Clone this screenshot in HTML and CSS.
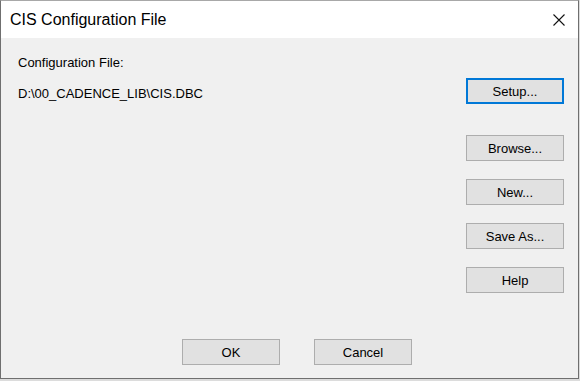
FILE: index.html
```html
<!DOCTYPE html>
<html>
<head>
    <title>CIS Configuration File</title>
    <link rel="stylesheet" href="styles.css">
</head>
<body>
    <div class="window">
        <div class="title-bar">
            <span class="title">CIS Configuration File</span>
            <svg class="close-icon" width="12" height="12" viewBox="0 0 12 12">
                <path d="M0.5 0.5 L11.5 11.5 M11.5 0.5 L0.5 11.5" stroke="#111" stroke-width="1.1" fill="none"/>
            </svg>
        </div>
        <div class="dialog-body">
            <div class="main-area">
                <div class="file-info">
                    <div class="file-label">Configuration File:</div>
                    <div class="file-path">D:\00_CADENCE_LIB\CIS.DBC</div>
                </div>
                <div class="side-buttons">
                    <button class="btn btn-default setup-btn">Setup...</button>
                    <button class="btn">Browse...</button>
                    <button class="btn">New...</button>
                    <button class="btn">Save As...</button>
                    <button class="btn">Help</button>
                </div>
            </div>
            <div class="footer">
                <button class="btn">OK</button>
                <button class="btn">Cancel</button>
            </div>
        </div>
    </div>
</body>
</html>
```

FILE: styles.css
```css
body {
    margin: 0;
    padding: 0;
    background-color: #dcdcdc;
    font-family: "Liberation Sans", Arial, sans-serif;
    color: #000;
}
.window {
    width: 577px;
    height: 377px;
    border: 1px solid #6f6f6f;
    border-top-color: #a8a8a8;
    background-color: #f0f0f0;
    display: flex;
    flex-direction: column;
}
.title-bar {
    height: 37px;
    background-color: #fff;
    display: flex;
    align-items: center;
    justify-content: space-between;
}
.title {
    font-size: 16px;
    padding-left: 9px;
    line-height: 37px;
    color: #000;
}
.close-icon {
    margin-right: 13px;
    margin-top: 1px;
}
.dialog-body {
    flex: 1;
    display: flex;
    flex-direction: column;
}
.main-area {
    display: flex;
    justify-content: space-between;
    padding: 17px 14px 0 17px;
}
.file-info {
    font-size: 13px;
    line-height: 15px;
}
.file-path {
    margin-top: 16px;
}
.side-buttons {
    display: flex;
    flex-direction: column;
    gap: 18px;
    margin-top: 23px;
}
.btn {
    width: 98px;
    height: 26px;
    padding: 0;
    box-sizing: border-box;
    background-color: #e1e1e1;
    border: 1px solid #adadad;
    border-radius: 0;
    font-family: "Liberation Sans", Arial, sans-serif;
    font-size: 13px;
    color: #000;
}
.btn-default {
    border: 2px solid #0078d7;
}
.setup-btn {
    margin-bottom: 13px;
}
.footer {
    margin-top: auto;
    display: flex;
    gap: 34px;
    padding: 0 0 13px 181px;
}
```
